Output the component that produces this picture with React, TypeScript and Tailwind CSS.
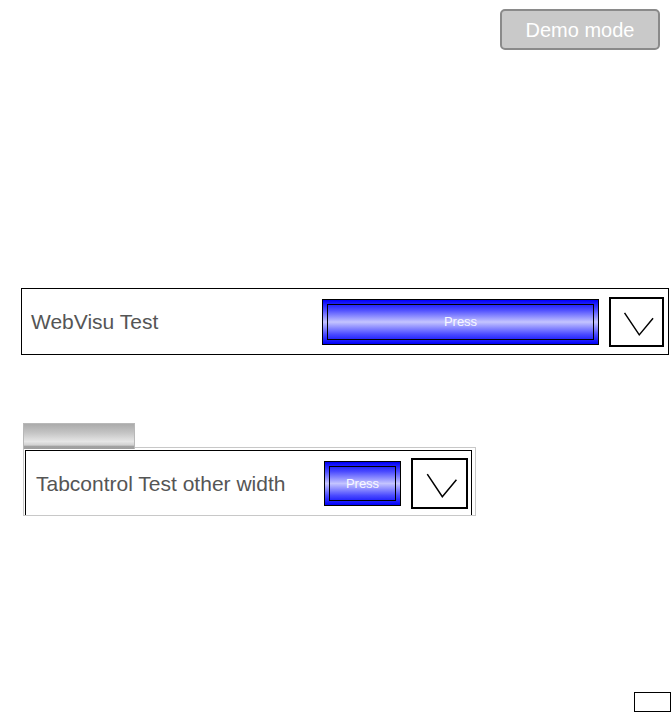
import React from "react";

const pressBg = "bg-[linear-gradient(to_bottom,#0000f8_0%,#4a4aff_22%,#c4c4ff_50%,#4a4aff_78%,#0000f8_100%)]";

function Chevron({ w, h }: { w: number; h: number }) {
  return (
    <svg width={w} height={h} viewBox="0 0 54 50" className="block">
      <polyline points="14,15 30,39 45,21" fill="none" stroke="#000" strokeWidth="1.6" />
    </svg>
  );
}

export default function App() {
  return (
    <div
      className="relative w-[671px] h-[715px] bg-white overflow-hidden"
      style={{ fontFamily: '"Liberation Sans", Arial, sans-serif' }}
    >
      <div className="flex justify-end pr-[11px] pt-[9px]">
        <div className="w-[160px] h-[41px] rounded-[5px] border-2 border-[#8a8a8a] bg-[#c9c9c9] flex items-center justify-center text-white text-[20px] leading-none">
          Demo mode
        </div>
      </div>

      <div className="mt-[238px] ml-[21px] w-[648px] h-[67px] border border-black flex items-center">
        <div className="flex-1 pl-[9px] text-[21px] text-[#555555] leading-none -mt-[1px]">WebVisu Test</div>
        <div className={`w-[277px] h-[46px] border border-black ${pressBg} p-[4px] mt-[1px]`}>
          <div className="w-full h-full border border-black flex items-center justify-center text-[13px] text-[#f8f8ff]">
            Press
          </div>
        </div>
        <div className="ml-[10px] mr-[4px] w-[55px] h-[50px] border-2 border-black flex items-center justify-center">
          <Chevron w={51} h={46} />
        </div>
      </div>

      <div className="mt-[68px] ml-[23px] w-[453px]">
        <div className="relative z-10 w-[112px] h-[26px] bg-[linear-gradient(to_bottom,#ababab_0%,#c4c4c4_35%,#e6e6e6_70%,#d0d0d0_85%,#a2a2a2_88%,#9e9e9e_100%)] border-t border-l border-r border-[#b8b8b8]" />
        <div className="-mt-[2px] w-[453px] h-[69px] border border-[#c8c8c8] pl-[1px] pt-[2px]">
          <div className="w-[447px] h-[65px] border-l border-t border-r border-black flex items-center">
            <div className="flex-1 pl-[10px] text-[21px] text-[#555555] leading-none">Tabcontrol Test other width</div>
            <div className={`w-[77px] h-[45px] border border-black ${pressBg} p-[4px] mt-[1px]`}>
              <div className="w-full h-full border border-black flex items-center justify-center text-[13px] text-[#f8f8ff]">
                Press
              </div>
            </div>
            <div className="ml-[10px] mr-[3px] w-[57px] h-[51px] border-2 border-black flex items-center justify-center">
              <Chevron w={53} h={47} />
            </div>
          </div>
        </div>
      </div>

      <div className="mt-[176px] ml-[634px] w-[37px] h-[20px] border border-black" />
    </div>
  );
}
